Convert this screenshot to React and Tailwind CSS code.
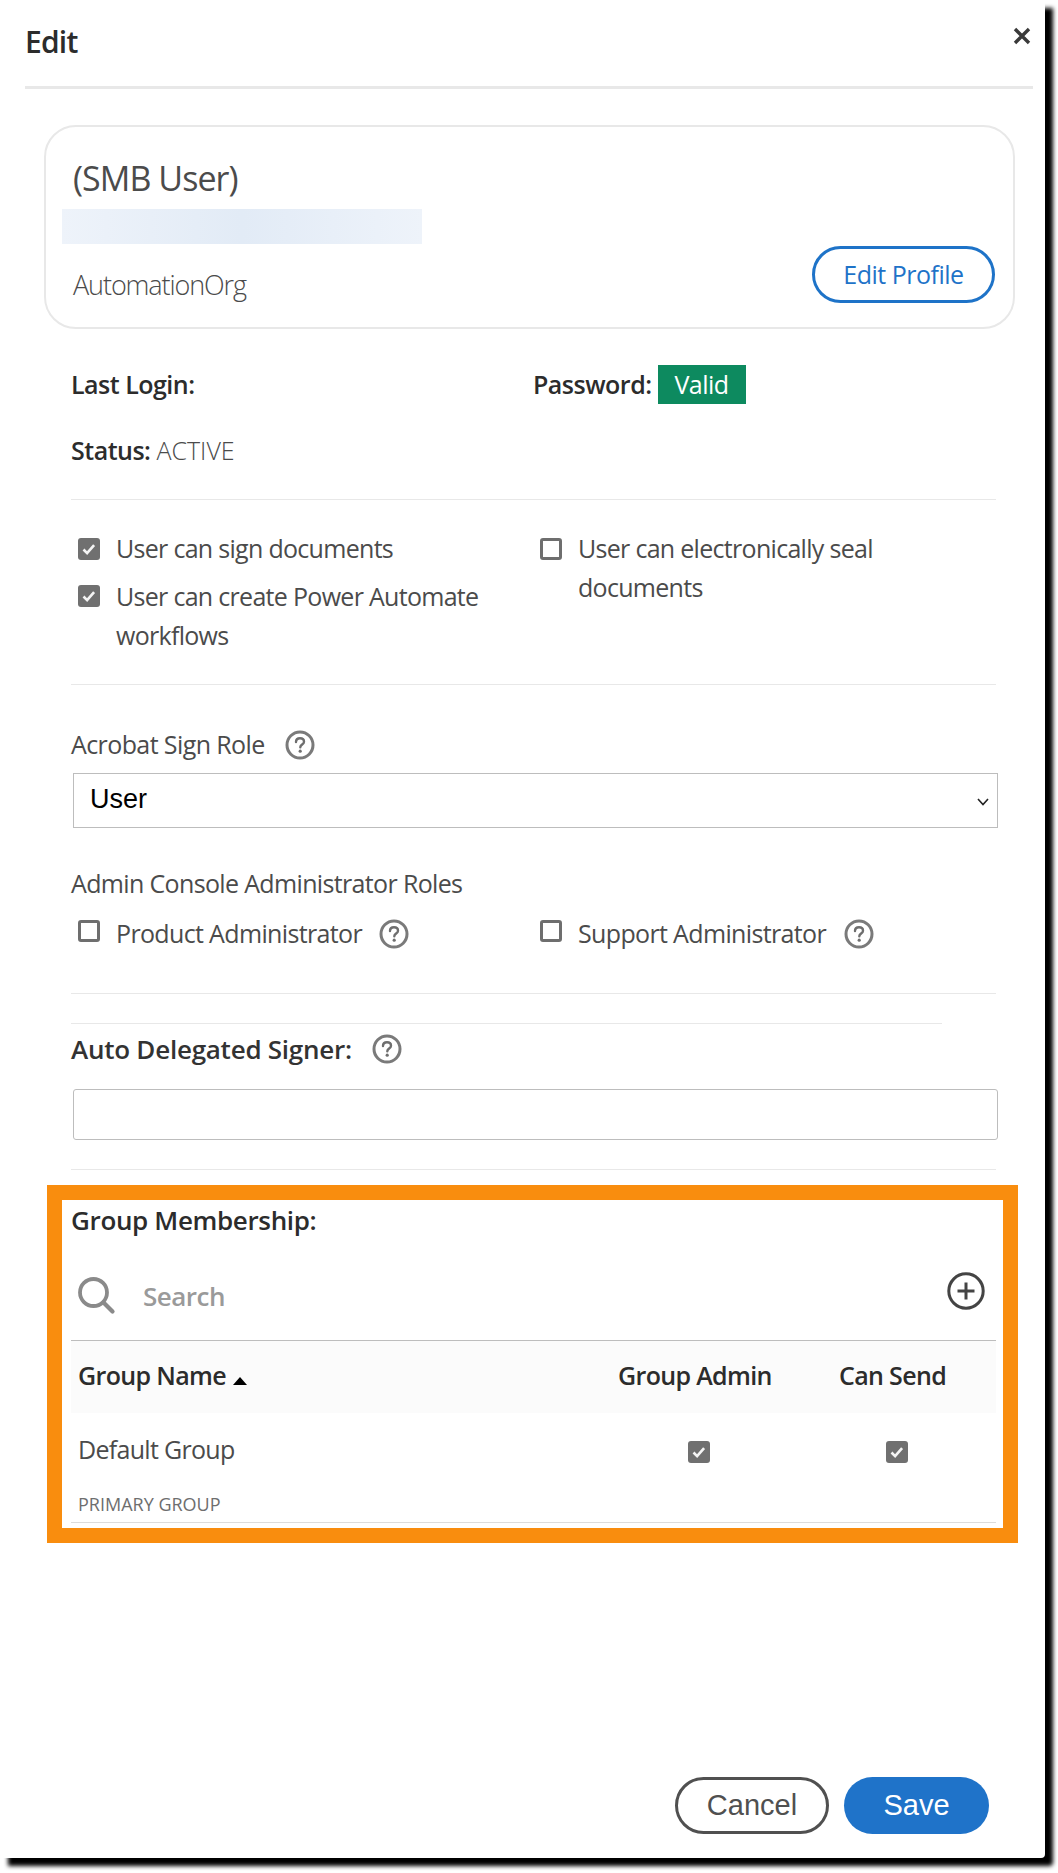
import React from "react";

const sans = "font-['Open_Sans','Noto_Sans',sans-serif]";

function Help({ className = "" }) {
  return (
    <svg width="30" height="30" viewBox="0 0 30 30" fill="none" className={className}>
      <circle cx="15" cy="15" r="13" stroke="#7a7a7a" strokeWidth="3" />
      <path d="M11 12c0-2.4 1.8-3.7 4-3.7s4 1.3 4 3.4c0 2.8-3.7 2.9-3.7 5.6" stroke="#6e6e6e" strokeWidth="2.4" strokeLinecap="round" />
      <circle cx="15.2" cy="21.2" r="1.6" fill="#6e6e6e" />
    </svg>
  );
}

function Check({ checked, className = "" }) {
  if (!checked) {
    return <span className={`block w-[22px] h-[22px] shrink-0 rounded-[3px] border-[3px] border-[#6e6e6e] bg-white ${className}`} />;
  }
  return (
    <span className={`flex items-center justify-center w-[22px] h-[22px] shrink-0 rounded-[3px] bg-[#707070] ${className}`}>
      <svg width="16" height="16" viewBox="0 0 16 16" fill="none">
        <path d="M2.5 8.5l3.6 3.6 7-8" stroke="#f4f4f4" strokeWidth="2.6" />
      </svg>
    </span>
  );
}

function Hr({ className = "" }) {
  return <div className={`h-px bg-[#e8e8e8] ${className}`} />;
}

export default function App() {
  return (
    <div className={`${sans} w-[1058px] h-[1873px] bg-white text-[#4b4b4b]`}>
      <div className="w-[1045px] h-[1858px] bg-white rounded-br-[4px] shadow-[8px_8px_4px_#000] flex flex-col overflow-visible">
        {/* header */}
        <div className="ml-[25px] w-[1008px] h-[89px] border-b-[3px] border-[#e8e8e8] flex justify-between">
          <div className="mt-[23px] h-[38px] leading-[38px] text-[30px] font-semibold text-[#2c2c2c] tracking-[-0.8px]">Edit</div>
          <svg width="18" height="18" viewBox="0 0 18 18" className="mt-[27px] mr-[2px]">
            <path d="M2 2l14 14M16 2L2 16" stroke="#3a3a3a" strokeWidth="3.4" />
          </svg>
        </div>

        {/* profile card */}
        <div className="ml-[44px] mt-[36px] w-[971px] h-[204px] shrink-0 rounded-[32px] border-2 border-[#e8e8e8] flex justify-between pl-[27px] pr-[18px]">
          <div className="flex flex-col">
            <div className="mt-[31px] h-[40px] leading-[40px] text-[34px] tracking-[-0.95px]">(SMB User)</div>
            <div className="-ml-[11px] mt-[11px] w-[360px] h-[35px] bg-gradient-to-r from-[#eef3fa] via-[#e2ebf6] to-[#eef3fa]" />
            <div className="mt-[24px] whitespace-nowrap h-[34px] leading-[34px] text-[27px] font-light tracking-[-1.1px]">AutomationOrg</div>
          </div>
          <button className="self-end mb-[24px] w-[183px] h-[57px] rounded-full border-[3px] border-[#1e73c8] text-[25px] text-[#1e73c8] tracking-[-0.5px]">Edit Profile</button>
        </div>

        {/* details */}
        <div className="ml-[71px] w-[925px]">
          <div className="mt-[36px] h-[39px] flex items-center text-[25px] font-semibold text-[#2c2c2c] tracking-[-0.5px]">
            <div className="w-[462px]">Last Login:</div>
            <div>Password:</div>
            <div className="ml-[6px] w-[88px] h-[39px] leading-[39px] text-center bg-[#0d8a5f] text-white font-normal text-[25px]">Valid</div>
          </div>
          <div className="mt-[31px] h-[30px] leading-[30px] text-[25px] tracking-[-0.5px]">
            <span className="font-semibold text-[#2c2c2c]">Status:</span> <span className="font-light tracking-[0px]">ACTIVE</span>
          </div>
          <Hr className="mt-[34px]" />

          <div className="mt-[29px] flex text-[25px] leading-[39px] tracking-[-0.7px]">
            <div className="w-[469px] flex flex-col gap-[9px]">
              <div className="flex gap-[16px] pl-[7px]">
                <Check checked className="mt-[9px]" />
                <div>User can sign documents</div>
              </div>
              <div className="flex gap-[16px] pl-[7px]">
                <Check checked className="mt-[8px]" />
                <div className="w-[370px]">User can create Power Automate workflows</div>
              </div>
            </div>
            <div className="flex gap-[16px]">
              <Check className="mt-[9px]" />
              <div className="w-[340px]">User can electronically seal documents</div>
            </div>
          </div>
          <Hr className="mt-[29px]" />

          <div className="mt-[45px] h-[30px] flex items-center gap-[20px] text-[25px] tracking-[-0.6px]">
            <span>Acrobat Sign Role</span>
            <Help />
          </div>
          <div className="mt-[13px] ml-[2px] -mr-[2px] h-[55px] border border-[#bdbdbd] flex items-center justify-between pl-[16px] pb-[3px] pr-[8px] font-['Liberation_Sans',sans-serif] text-[27px] text-black">
            <span>User</span>
            <svg width="12" height="8" viewBox="0 0 12 8" fill="none" className="mt-[5px]">
              <path d="M1 1l5 5.6L11 1" stroke="#222" strokeWidth="1.6" />
            </svg>
          </div>

          <div className="mt-[40px] h-[30px] leading-[30px] text-[25px] tracking-[-0.65px]">Admin Console Administrator Roles</div>
          <div className="mt-[21px] h-[30px] flex text-[25px] tracking-[-0.65px]">
            <div className="w-[469px] flex items-center pl-[7px]">
              <Check className="mb-[6px]" />
              <span className="ml-[16px]">Product Administrator</span>
              <Help className="ml-[17px]" />
            </div>
            <div className="flex items-center">
              <Check className="mb-[6px]" />
              <span className="ml-[16px]">Support Administrator</span>
              <Help className="ml-[18px]" />
            </div>
          </div>
          <Hr className="mt-[44px]" />
          <Hr className="mt-[29px] w-[871px]" />

          <div className="mt-[10px] h-[30px] flex items-center gap-[20px] text-[26px] font-semibold text-[#333] tracking-[-0.25px]">
            <span>Auto Delegated Signer:</span>
            <Help />
          </div>
          <div className="mt-[25px] ml-[2px] -mr-[2px] h-[51px] rounded-[3px] border border-[#bdbdbd]" />
          <Hr className="mt-[29px]" />
        </div>

        {/* group membership */}
        <div className="ml-[47px] mt-[15px] w-[971px] h-[358px] shrink-0 border-[15px] border-[#f98d0e] pt-[5px] pl-[9px] pr-[7px]">
          <div className="h-[30px] leading-[30px] text-[26px] font-semibold text-[#2c2c2c] tracking-[-0.35px]">Group Membership:</div>
          <div className="mt-[35px] h-[71px] border-b border-[#bdbdbd] flex justify-between">
            <div className="flex items-start pl-[7px]">
              <svg width="38" height="38" viewBox="0 0 38 38" fill="none" className="mt-[7px]">
                <circle cx="15.5" cy="15.5" r="13.5" stroke="#8a8a8a" strokeWidth="3.8" />
                <path d="M25.5 25.5l9 9" stroke="#8a8a8a" strokeWidth="4.2" strokeLinecap="round" />
              </svg>
              <span className="ml-[27px] mt-[10px] h-[32px] leading-[32px] text-[26px] font-semibold text-[#9a9a9a] tracking-[-0.5px]">Search</span>
            </div>
            <svg width="38" height="38" viewBox="0 0 38 38" fill="none" className="mt-[2px] mr-[11px]">
              <circle cx="19" cy="19" r="17.2" stroke="#444" strokeWidth="3" />
              <path d="M19 10.5v17M10.5 19h17" stroke="#444" strokeWidth="3" />
            </svg>
          </div>
          <div className="h-[72px] pb-[2px] bg-[#fbfbfb] flex items-center text-[25px] font-semibold text-[#2c2c2c] tracking-[-0.65px]">
            <div className="w-[547px] pl-[7px] flex items-center">
              <span>Group Name</span>
              <span className="ml-[7px] mt-[10px] w-0 h-0 border-x-[7px] border-x-transparent border-b-[8px] border-b-black" />
            </div>
            <div className="w-[221px]">Group Admin</div>
            <div>Can Send</div>
          </div>
          <div className="h-[110px] border-b border-[#dcdcdc] flex">
            <div className="w-[547px] pl-[7px]">
              <div className="mt-[18px] h-[36px] leading-[36px] text-[25px] tracking-[-0.7px]">Default Group</div>
              <div className="mt-[25px] h-[24px] leading-[24px] text-[18px] text-[#6e6e6e]">PRIMARY GROUP</div>
            </div>
            <div className="w-[221px] pl-[70px] pt-[28px]"><Check checked /></div>
            <div className="pl-[47px] pt-[28px]"><Check checked /></div>
          </div>
        </div>

        {/* footer */}
        <div className="mt-[234px] pr-[56px] flex justify-end gap-[15px] font-['Liberation_Sans',sans-serif] text-[29px]">
          <button className="w-[154px] h-[57px] rounded-full border-[3px] border-[#505050] text-[#505050]">Cancel</button>
          <button className="w-[145px] h-[57px] rounded-full bg-[#1f73c9] text-white">Save</button>
        </div>
      </div>
    </div>
  );
}
